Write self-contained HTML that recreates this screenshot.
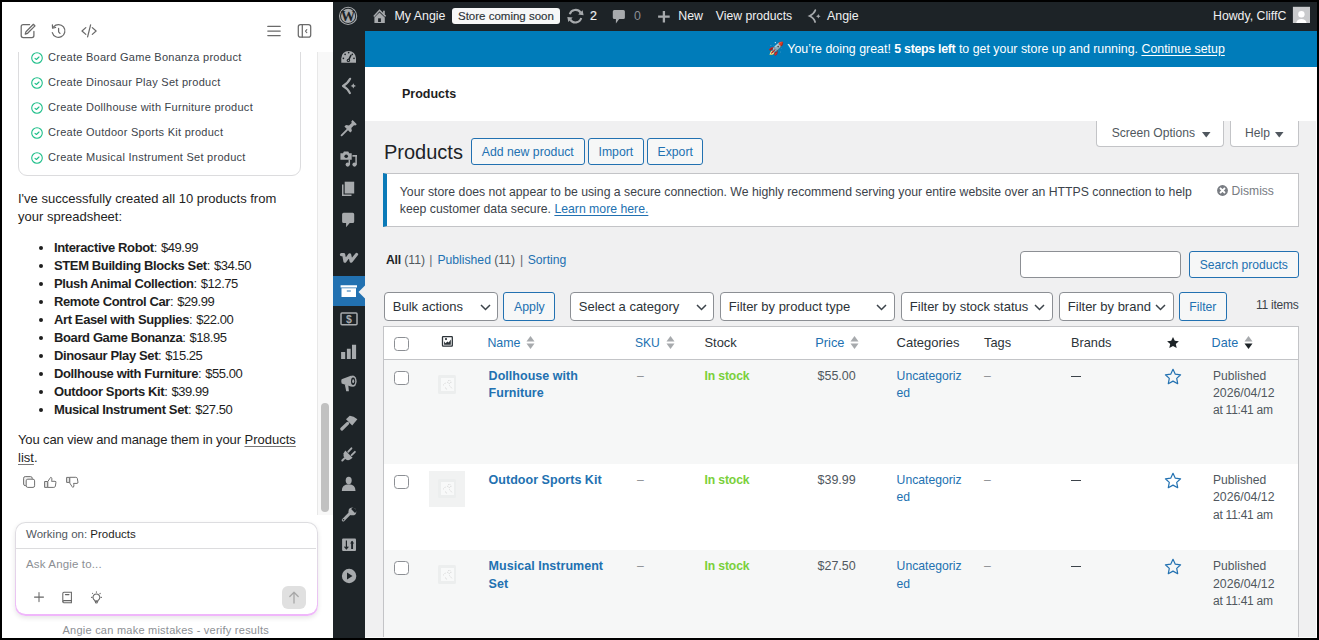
<!DOCTYPE html>
<html><head><meta charset="utf-8"><title>Products</title>
<style>
html,body{margin:0;padding:0;width:1319px;height:640px;overflow:hidden;background:#000}
body{position:relative;font-family:"Liberation Sans",sans-serif}
.t{position:absolute;white-space:nowrap;line-height:1}
.r{position:absolute;display:block}
b{font-weight:700}
</style></head><body>
<div class="r" style="left:0px;top:0px;width:1319px;height:640px;background:#000"></div>
<div class="r" style="left:2px;top:2px;width:1315px;height:636px;background:#fff"></div>
<div class="r" style="left:2px;top:2px;width:331px;height:636px;background:#fff"></div>
<svg class="r" style="left:0;top:0" width="330" height="50" viewBox="0 0 330 50" fill="none" stroke="#6a6a6a" stroke-width="1.25" stroke-linecap="round" stroke-linejoin="round"><path d="M29.6 24.6H23.2a2 2 0 0 0-2 2v9a2 2 0 0 0 2 2h8.7a2 2 0 0 0 2-2V31.4"/><path d="M33.4 24.3l1.6 1.6-7.4 7.4-2.4.8.8-2.4z"/><path d="M52.3 32.6A6.4 6.4 0 1 0 53.6 26.8"/><path d="M52.4 24.9l.2 3.2 3-.6"/><path d="M58.6 28.4v3.4l1.4 1.6"/><path d="M85.8 27.6L82 31l3.8 3.4M92.3 27.6L96.1 31l-3.8 3.4M90.6 24.8L87.6 36.8"/><path d="M267.8 26.4h12.4M267.8 31h12.4M267.8 35.5h12.4"/><rect x="298.3" y="24.6" width="12.4" height="12.5" rx="2.2"/><path d="M302.3 24.8v12.2"/><path d="M306.8 29.6l-1.3 1.5 1.3 1.5" stroke-width="1.1"/></svg>
<div class="r" style="left:2px;top:52px;width:315px;height:463px;overflow:hidden">
<div class="r" style="left:16px;top:-40px;width:283px;height:164px;border:1px solid #dcdcde;border-radius:9px;box-sizing:border-box"></div>
</div>
<svg class="r" style="left:31px;top:52px;" width="12" height="12" viewBox="0 0 12 12" fill="none"><circle cx="6" cy="6" r="5.3" stroke="#1fbf8a" stroke-width="1.1"/><path d="M4 6.3l1.4 1.2 2.6-2.5" stroke="#1fbf8a" stroke-width="1.1" stroke-linecap="round" stroke-linejoin="round"/></svg>
<div class="t" style="left:48px;top:52.00px;font-size:11px;font-weight:400;color:#3c434a;letter-spacing:.27px">Create Board Game Bonanza product</div>
<svg class="r" style="left:31px;top:77px;" width="12" height="12" viewBox="0 0 12 12" fill="none"><circle cx="6" cy="6" r="5.3" stroke="#1fbf8a" stroke-width="1.1"/><path d="M4 6.3l1.4 1.2 2.6-2.5" stroke="#1fbf8a" stroke-width="1.1" stroke-linecap="round" stroke-linejoin="round"/></svg>
<div class="t" style="left:48px;top:77.00px;font-size:11px;font-weight:400;color:#3c434a;letter-spacing:.27px">Create Dinosaur Play Set product</div>
<svg class="r" style="left:31px;top:102px;" width="12" height="12" viewBox="0 0 12 12" fill="none"><circle cx="6" cy="6" r="5.3" stroke="#1fbf8a" stroke-width="1.1"/><path d="M4 6.3l1.4 1.2 2.6-2.5" stroke="#1fbf8a" stroke-width="1.1" stroke-linecap="round" stroke-linejoin="round"/></svg>
<div class="t" style="left:48px;top:102.00px;font-size:11px;font-weight:400;color:#3c434a;letter-spacing:.27px">Create Dollhouse with Furniture product</div>
<svg class="r" style="left:31px;top:127px;" width="12" height="12" viewBox="0 0 12 12" fill="none"><circle cx="6" cy="6" r="5.3" stroke="#1fbf8a" stroke-width="1.1"/><path d="M4 6.3l1.4 1.2 2.6-2.5" stroke="#1fbf8a" stroke-width="1.1" stroke-linecap="round" stroke-linejoin="round"/></svg>
<div class="t" style="left:48px;top:127.00px;font-size:11px;font-weight:400;color:#3c434a;letter-spacing:.27px">Create Outdoor Sports Kit product</div>
<svg class="r" style="left:31px;top:152px;" width="12" height="12" viewBox="0 0 12 12" fill="none"><circle cx="6" cy="6" r="5.3" stroke="#1fbf8a" stroke-width="1.1"/><path d="M4 6.3l1.4 1.2 2.6-2.5" stroke="#1fbf8a" stroke-width="1.1" stroke-linecap="round" stroke-linejoin="round"/></svg>
<div class="t" style="left:48px;top:152.00px;font-size:11px;font-weight:400;color:#3c434a;letter-spacing:.27px">Create Musical Instrument Set product</div>
<div class="t" style="left:18px;top:192.00px;font-size:13px;font-weight:400;color:#1e1e1e;">I&#x27;ve successfully created all 10 products from</div>
<div class="t" style="left:18px;top:210.00px;font-size:13px;font-weight:400;color:#1e1e1e;">your spreadsheet:</div>
<div class="r" style="left:39px;top:246px;width:4.3px;height:4.3px;background:#1e1e1e;border-radius:50%"></div>
<div class="t" style="left:54px;top:241.00px;font-size:13px;font-weight:400;color:#1e1e1e;"><b style="letter-spacing:-.38px">Interactive Robot</b>: <span style="letter-spacing:-.45px">$49.99</span></div>
<div class="r" style="left:39px;top:264px;width:4.3px;height:4.3px;background:#1e1e1e;border-radius:50%"></div>
<div class="t" style="left:54px;top:259.00px;font-size:13px;font-weight:400;color:#1e1e1e;"><b style="letter-spacing:-.38px">STEM Building Blocks Set</b>: <span style="letter-spacing:-.45px">$34.50</span></div>
<div class="r" style="left:39px;top:282px;width:4.3px;height:4.3px;background:#1e1e1e;border-radius:50%"></div>
<div class="t" style="left:54px;top:277.00px;font-size:13px;font-weight:400;color:#1e1e1e;"><b style="letter-spacing:-.38px">Plush Animal Collection</b>: <span style="letter-spacing:-.45px">$12.75</span></div>
<div class="r" style="left:39px;top:300px;width:4.3px;height:4.3px;background:#1e1e1e;border-radius:50%"></div>
<div class="t" style="left:54px;top:295.00px;font-size:13px;font-weight:400;color:#1e1e1e;"><b style="letter-spacing:-.38px">Remote Control Car</b>: <span style="letter-spacing:-.45px">$29.99</span></div>
<div class="r" style="left:39px;top:318px;width:4.3px;height:4.3px;background:#1e1e1e;border-radius:50%"></div>
<div class="t" style="left:54px;top:313.00px;font-size:13px;font-weight:400;color:#1e1e1e;"><b style="letter-spacing:-.38px">Art Easel with Supplies</b>: <span style="letter-spacing:-.45px">$22.00</span></div>
<div class="r" style="left:39px;top:336px;width:4.3px;height:4.3px;background:#1e1e1e;border-radius:50%"></div>
<div class="t" style="left:54px;top:331.00px;font-size:13px;font-weight:400;color:#1e1e1e;"><b style="letter-spacing:-.38px">Board Game Bonanza</b>: <span style="letter-spacing:-.45px">$18.95</span></div>
<div class="r" style="left:39px;top:354px;width:4.3px;height:4.3px;background:#1e1e1e;border-radius:50%"></div>
<div class="t" style="left:54px;top:349.00px;font-size:13px;font-weight:400;color:#1e1e1e;"><b style="letter-spacing:-.38px">Dinosaur Play Set</b>: <span style="letter-spacing:-.45px">$15.25</span></div>
<div class="r" style="left:39px;top:372px;width:4.3px;height:4.3px;background:#1e1e1e;border-radius:50%"></div>
<div class="t" style="left:54px;top:367.00px;font-size:13px;font-weight:400;color:#1e1e1e;"><b style="letter-spacing:-.38px">Dollhouse with Furniture</b>: <span style="letter-spacing:-.45px">$55.00</span></div>
<div class="r" style="left:39px;top:390px;width:4.3px;height:4.3px;background:#1e1e1e;border-radius:50%"></div>
<div class="t" style="left:54px;top:385.00px;font-size:13px;font-weight:400;color:#1e1e1e;"><b style="letter-spacing:-.38px">Outdoor Sports Kit</b>: <span style="letter-spacing:-.45px">$39.99</span></div>
<div class="r" style="left:39px;top:408px;width:4.3px;height:4.3px;background:#1e1e1e;border-radius:50%"></div>
<div class="t" style="left:54px;top:403.00px;font-size:13px;font-weight:400;color:#1e1e1e;"><b style="letter-spacing:-.38px">Musical Instrument Set</b>: <span style="letter-spacing:-.45px">$27.50</span></div>
<div class="t" style="left:18px;top:433.00px;font-size:13px;font-weight:400;color:#1e1e1e;"><span style="letter-spacing:-.12px">You can view and manage them in your</span> <u style="text-underline-offset:2px;text-decoration-thickness:1px;text-decoration-color:#777">Products</u></div>
<div class="t" style="left:18px;top:451.00px;font-size:13px;font-weight:400;color:#1e1e1e;"><u style="text-underline-offset:2px;text-decoration-thickness:1px;text-decoration-color:#777">list</u>.</div>
<svg class="r" style="left:15px;top:470px" width="70" height="24" viewBox="15 470 70 24" stroke="#707070" stroke-width="1" stroke-linejoin="round"><rect x="23.6" y="476.6" width="8.6" height="9" rx="1.6" fill="#f0f0f0"/><rect x="26.2" y="479.2" width="8.4" height="8.2" rx="1.6" fill="#fff"/><rect x="44.6" y="481.5" width="3.2" height="5.9" fill="#e6e6e6"/><path d="M47.8 481.6L50 478.2Q50.6 476.9 51.4 477.6Q52.2 478.5 51.8 480.3L51.5 481.3H55Q56.3 481.3 55.9 482.8L55.3 486.3Q55 487.4 53.8 487.4H47.8z" fill="#fff"/><rect x="66.6" y="477.4" width="3.2" height="5" fill="#e6e6e6"/><path d="M69.8 483.1L72 486.5Q72.6 487.8 73.4 487.1Q74.2 486.2 73.8 484.4L73.5 483.4H77Q78.3 483.4 77.9 481.9L77.3 478.4Q77 477.3 75.8 477.3H69.8z" fill="#fff"/></svg>
<div class="r" style="left:317px;top:52px;width:16px;height:463px;background:#f8f8f8;border-left:1px solid #e8e8e8;box-sizing:border-box"></div>
<div class="r" style="left:320.8px;top:403px;width:8px;height:109px;background:#c1c1c1;border-radius:4px"></div>
<div class="r" style="left:14.5px;top:522px;width:303px;height:94px;border-radius:10.5px;background:linear-gradient(180deg,#dddde0 0%,#e2d8e6 45%,#f0b6fb 100%);box-shadow:0 2px 5px rgba(0,0,0,.10)"></div>
<div class="r" style="left:15.5px;top:523px;width:301px;height:90.5px;border-radius:9.5px;background:#fff"></div>
<div class="r" style="left:16px;top:548px;width:300px;height:1px;background:#dcdcde"></div>
<div class="t" style="left:26px;top:529.00px;font-size:11.5px;font-weight:400;color:#50575e;">Working on: <span style="color:#1e1e1e">Products</span></div>
<div class="t" style="left:26px;top:559.00px;font-size:11.5px;font-weight:400;color:#8c8f94;letter-spacing:.15px">Ask Angie to...</div>
<svg class="r" style="left:20px;top:580px" width="100" height="30" viewBox="20 580 100 30" fill="none" stroke="#666" stroke-width="1.05" stroke-linecap="round"><path d="M39 592.6v9M34.5 597.1h9"/><path d="M64 592.2h7.4v8.4H64.2a1.4 1.4 0 0 0-1.4 1.4V593.6a1.4 1.4 0 0 1 1.2-1.4z"/><path d="M62.8 601.8a.9.9 0 0 0 .9.9h7.7v-2.1"/><path d="M65.4 594.6h3.6"/><path d="M94.6 600.2a3.4 3.4 0 1 1 3.6 0l-.4.9h-2.8z"/><circle cx="96.4" cy="601.9" r="1"/><path d="M92.6 593.4l.01.01M96.4 591.9v.3M100.2 593.4l-.2.2M91.6 597.4h.4M101 597.4h.4" stroke-width="1.1"/></svg>
<div class="r" style="left:282px;top:586px;width:24px;height:23px;background:#e0e0e0;border-radius:6px"></div>
<svg class="r" style="left:288px;top:591px;" width="12" height="13" viewBox="0 0 12 13" fill="none"><path d="M6 12V1.5M1.8 5.5L6 1.3l4.2 4.2" stroke="#a8a8a8" stroke-width="1.3" stroke-linecap="round" stroke-linejoin="round"/></svg>
<div class="t" style="left:62.5px;top:625.00px;font-size:11px;font-weight:400;color:#8c8f94;letter-spacing:.24px">Angie can make mistakes - verify results</div>
<div class="r" style="left:333px;top:2px;width:984px;height:29px;background:#1d2327"></div>
<div class="r" style="left:333px;top:31px;width:32px;height:607px;background:#1d2327"></div>
<svg class="r" style="left:333px;top:0" width="986" height="32" viewBox="333 0 986 32"><circle cx="348.1" cy="15.9" r="8.6" stroke="#a7aaad" stroke-width="1.1" fill="none"/><circle cx="348.1" cy="15.9" r="7.1" fill="#a7aaad"/><text x="348.1" y="21" font-family="Liberation Serif" font-weight="700" font-size="14.5" fill="#1d2327" text-anchor="middle">W</text><path d="M373.8 16.4L379.5 10.3L385.6 16.4" stroke="#a7aaad" stroke-width="1.5" fill="none"/><path d="M383.1 10.7h1.7v3.7h-1.7z" fill="#a7aaad"/><path d="M374.4 23.1V17.4L379.5 12.4L384.8 17.4V23.1z" fill="#a7aaad"/><path d="M378.1 18.3h2.8v3.7h-2.8z" fill="#1d2327"/><path d="M569.8 14.2A6 6 0 0 1 580.6 12.6M581.2 18A6 6 0 0 1 570.3 19.6" stroke="#a7aaad" stroke-width="2.1" fill="none"/><path d="M578.2 14.6L583.6 15.3L582.6 10.2zM572.7 17.6L567.3 16.9L568.3 22z" fill="#a7aaad"/><path d="M614.3 9.9h9.1a1.5 1.5 0 0 1 1.5 1.5v6a1.5 1.5 0 0 1-1.5 1.5h-4.2l-3.3 4.7v-4.7h-1.6a1.5 1.5 0 0 1-1.5-1.5v-6a1.5 1.5 0 0 1 1.5-1.5z" fill="#a7aaad"/><path d="M663.9 10.9v11.6M658.1 16.7h11.6" stroke="#a7aaad" stroke-width="2.3"/><path d="M815.3 10.2C814.4 12.6 812.3 14.7 809.6 16C812.3 17.3 814.4 19.4 815.1 22" stroke="#a7aaad" stroke-width="1.8" stroke-linecap="round" fill="none"/><path d="M818.3 14Q818.6 16 820.6 16.3Q818.6 16.6 818.3 18.6Q818 16.6 816 16.3Q818 16 818.3 14z" fill="#a7aaad"/><rect x="1292.9" y="6.8" width="17.1" height="16.2" fill="#c9cacc"/><circle cx="1301.4" cy="14.3" r="3.2" fill="#fff"/><path d="M1296.2 23C1296.6 20.3 1298.6 18.9 1301.4 18.9S1306.2 20.3 1306.6 23z" fill="#fff"/></svg>
<div class="t" style="left:394.5px;top:10.00px;font-size:12.4px;font-weight:400;color:#f0f0f1;">My Angie</div>
<div class="r" style="left:452px;top:8px;width:108px;height:16px;background:#f6f7f7;border-radius:3px"></div>
<div class="t" style="left:458px;top:11.00px;font-size:11.5px;font-weight:400;color:#2c3338;letter-spacing:0px;-webkit-text-stroke:.15px #2c3338">Store coming soon</div>
<div class="t" style="left:590px;top:10.00px;font-size:12.4px;font-weight:400;color:#f0f0f1;-webkit-text-stroke:.2px #f0f0f1">2</div>
<div class="t" style="left:634px;top:10.00px;font-size:12.4px;font-weight:400;color:#8c8f94;">0</div>
<div class="t" style="left:678.2px;top:10.00px;font-size:12.4px;font-weight:400;color:#f0f0f1;">New</div>
<div class="t" style="left:715.8px;top:10.00px;font-size:12.2px;font-weight:400;color:#f0f0f1;">View products</div>
<div class="t" style="left:827px;top:10.00px;font-size:12.4px;font-weight:400;color:#f0f0f1;">Angie</div>
<div class="t" style="left:1213px;top:10.00px;font-size:12.3px;font-weight:400;color:#f0f0f1;">Howdy, CliffC</div>
<div class="r" style="left:365px;top:31px;width:952px;height:36px;background:#007cba"></div>
<div class="t" style="left:768px;top:42.00px;font-size:13px;font-weight:400;color:#fff;">🚀</div>
<div class="t" style="left:787.3px;top:43.00px;font-size:12.4px;font-weight:400;color:#fff;">You’re doing great! <b style="letter-spacing:-.3px">5 steps left</b> to get your store up and running. <u style="text-underline-offset:1.5px">Continue setup</u></div>
<div class="r" style="left:365px;top:67px;width:952px;height:54px;background:#fff"></div>
<div class="t" style="left:402px;top:88.00px;font-size:12.5px;font-weight:700;color:#1e1e1e;">Products</div>
<div class="r" style="left:365px;top:121px;width:952px;height:517px;background:#f0f0f1"></div>
<div class="r" style="left:1096px;top:121px;width:128px;height:25.5px;background:#fff;border:1px solid #c3c4c7;border-top:0;border-radius:0 0 4px 4px;box-sizing:border-box"></div>
<div class="t" style="left:1111.7px;top:127.00px;font-size:12.1px;font-weight:400;color:#50575e;">Screen Options</div>
<svg class="r" style="left:1202px;top:131.5px;" width="9" height="6" viewBox="0 0 9 6" fill="none"><path d="M0 0h8.5L4.25 5.5z" fill="#50575e"/></svg>
<div class="r" style="left:1230px;top:121px;width:68.5px;height:25.5px;background:#fff;border:1px solid #c3c4c7;border-top:0;border-radius:0 0 4px 4px;box-sizing:border-box"></div>
<div class="t" style="left:1245px;top:127.00px;font-size:12.1px;font-weight:400;color:#50575e;">Help</div>
<svg class="r" style="left:1275px;top:131.5px;" width="9" height="6" viewBox="0 0 9 6" fill="none"><path d="M0 0h8.5L4.25 5.5z" fill="#50575e"/></svg>
<div class="t" style="left:384px;top:142.00px;font-size:20px;font-weight:400;color:#1d2327;">Products</div>
<div class="r" style="left:471px;top:138px;width:114px;height:27px;background:#f6f7f7;border:1px solid #2271b1;border-radius:3px;box-sizing:border-box"></div>
<div class="r" style="left:588px;top:138px;width:56px;height:27px;background:#f6f7f7;border:1px solid #2271b1;border-radius:3px;box-sizing:border-box"></div>
<div class="r" style="left:647px;top:138px;width:56px;height:27px;background:#f6f7f7;border:1px solid #2271b1;border-radius:3px;box-sizing:border-box"></div>
<div class="t" style="left:481.8px;top:146.00px;font-size:12.25px;font-weight:400;color:#2271b1;">Add new product</div>
<div class="t" style="left:598.5px;top:146.00px;font-size:12.25px;font-weight:400;color:#2271b1;">Import</div>
<div class="t" style="left:657.5px;top:146.00px;font-size:12.25px;font-weight:400;color:#2271b1;">Export</div>
<div class="r" style="left:383px;top:173px;width:916px;height:53.5px;background:#fff;border:1px solid #c3c4c7;border-left:4px solid #0a7ab8;box-sizing:border-box"></div>
<div class="t" style="left:399.8px;top:186.00px;font-size:12.26px;font-weight:400;color:#3c434a;">Your store does not appear to be using a secure connection. We highly recommend serving your entire website over an HTTPS connection to help</div>
<div class="t" style="left:399.8px;top:203.00px;font-size:12.26px;font-weight:400;color:#3c434a;">keep customer data secure. <u style="color:#2271b1;text-underline-offset:1.5px">Learn more here.</u></div>
<svg class="r" style="left:1217px;top:185px;" width="11" height="11" viewBox="0 0 11 11" fill="none"><circle cx="5.5" cy="5.5" r="5.4" fill="#787c82"/><path d="M3 3l5 5M8 3l-5 5" stroke="#fff" stroke-width="1.8"/></svg>
<div class="t" style="left:1231.6px;top:185.00px;font-size:12.1px;font-weight:400;color:#787c82;">Dismiss</div>
<div class="t" style="left:385.9px;top:254.00px;font-size:12.2px;font-weight:400;color:#3c434a;"><b style="color:#1d2327;letter-spacing:-.2px">All</b> <span style="color:#50575e">(11)</span></div>
<div class="t" style="left:429.3px;top:254.00px;font-size:12.2px;font-weight:400;color:#646970;">|</div>
<div class="t" style="left:437.4px;top:254.00px;font-size:12.2px;font-weight:400;color:#3c434a;"><span style="color:#2271b1">Published</span> <span style="color:#50575e">(11)</span></div>
<div class="t" style="left:520px;top:254.00px;font-size:12.2px;font-weight:400;color:#646970;">|</div>
<div class="t" style="left:527.7px;top:254.00px;font-size:12.2px;font-weight:400;color:#2271b1;">Sorting</div>
<div class="r" style="left:1020px;top:251px;width:160.5px;height:26.5px;background:#fff;border:1px solid #8c8f94;border-radius:4px;box-sizing:border-box"></div>
<div class="r" style="left:1189px;top:251px;width:110px;height:26.5px;background:#f6f7f7;border:1px solid #2271b1;border-radius:3px;box-sizing:border-box"></div>
<div class="t" style="left:1199.8px;top:259.00px;font-size:12.1px;font-weight:400;color:#2271b1;">Search products</div>
<div class="r" style="left:384px;top:292px;width:114px;height:28.5px;background:#fff;border:1px solid #8c8f94;border-radius:4px;box-sizing:border-box"></div>
<div class="t" style="left:392.8px;top:300.00px;font-size:13px;font-weight:400;color:#2c3338;">Bulk actions</div>
<svg class="r" style="left:479.5px;top:303.5px;" width="11" height="7" viewBox="0 0 11 7" fill="none"><path d="M1 1l4.5 4.5L10 1" stroke="#3c434a" stroke-width="1.5" fill="none"/></svg>
<div class="r" style="left:503px;top:292px;width:52px;height:28.5px;background:#f6f7f7;border:1px solid #2271b1;border-radius:3px;box-sizing:border-box"></div>
<div class="t" style="left:514px;top:301.00px;font-size:12.3px;font-weight:400;color:#2271b1;">Apply</div>
<div class="r" style="left:570px;top:292px;width:144px;height:28.5px;background:#fff;border:1px solid #8c8f94;border-radius:4px;box-sizing:border-box"></div>
<div class="t" style="left:578.8px;top:300.00px;font-size:13px;font-weight:400;color:#2c3338;">Select a category</div>
<svg class="r" style="left:695.5px;top:303.5px;" width="11" height="7" viewBox="0 0 11 7" fill="none"><path d="M1 1l4.5 4.5L10 1" stroke="#3c434a" stroke-width="1.5" fill="none"/></svg>
<div class="r" style="left:720px;top:292px;width:174.5px;height:28.5px;background:#fff;border:1px solid #8c8f94;border-radius:4px;box-sizing:border-box"></div>
<div class="t" style="left:728.8px;top:300.00px;font-size:13px;font-weight:400;color:#2c3338;">Filter by product type</div>
<svg class="r" style="left:876.0px;top:303.5px;" width="11" height="7" viewBox="0 0 11 7" fill="none"><path d="M1 1l4.5 4.5L10 1" stroke="#3c434a" stroke-width="1.5" fill="none"/></svg>
<div class="r" style="left:901px;top:292px;width:151.5px;height:28.5px;background:#fff;border:1px solid #8c8f94;border-radius:4px;box-sizing:border-box"></div>
<div class="t" style="left:909.8px;top:300.00px;font-size:13px;font-weight:400;color:#2c3338;">Filter by stock status</div>
<svg class="r" style="left:1034.0px;top:303.5px;" width="11" height="7" viewBox="0 0 11 7" fill="none"><path d="M1 1l4.5 4.5L10 1" stroke="#3c434a" stroke-width="1.5" fill="none"/></svg>
<div class="r" style="left:1059px;top:292px;width:114.5px;height:28.5px;background:#fff;border:1px solid #8c8f94;border-radius:4px;box-sizing:border-box"></div>
<div class="t" style="left:1067.8px;top:300.00px;font-size:13px;font-weight:400;color:#2c3338;">Filter by brand</div>
<svg class="r" style="left:1155.0px;top:303.5px;" width="11" height="7" viewBox="0 0 11 7" fill="none"><path d="M1 1l4.5 4.5L10 1" stroke="#3c434a" stroke-width="1.5" fill="none"/></svg>
<div class="r" style="left:1179px;top:292px;width:48px;height:28.5px;background:#f6f7f7;border:1px solid #2271b1;border-radius:3px;box-sizing:border-box"></div>
<div class="t" style="left:1189.3px;top:301.00px;font-size:12.2px;font-weight:400;color:#2271b1;">Filter</div>
<div class="t" style="left:1255.9px;top:299.00px;font-size:12px;font-weight:400;color:#3c434a;letter-spacing:-.22px">11 items</div>
<div class="r" style="left:383px;top:326px;width:916px;height:312px;background:#fff;border:1px solid #c3c4c7;border-bottom:0;box-sizing:border-box"></div>
<div class="r" style="left:384px;top:359px;width:914px;height:1px;background:#c3c4c7"></div>
<div class="r" style="left:384px;top:360px;width:914px;height:104px;background:#f6f7f7"></div>
<div class="r" style="left:384px;top:550px;width:914px;height:88px;background:#f6f7f7"></div>
<div class="r" style="left:394px;top:337px;width:15px;height:14px;background:#fff;border:1px solid #8c8f94;border-radius:3.5px;box-sizing:border-box"></div>
<svg class="r" style="left:436px;top:332px" width="24" height="20" viewBox="436 332 24 20"><rect x="442.5" y="336.6" width="9.8" height="9.6" rx=".6" stroke="#2c3338" stroke-width="1.3" fill="#fff"/><circle cx="446" cy="339.1" r="1.1" fill="#2c3338"/><path d="M444.1 344.8V341.2L445.5 343.2L447.4 341.5L448.7 342.6L450.8 339.4V344.8z" fill="#2c3338"/></svg>
<div class="t" style="left:487.4px;top:337.00px;font-size:12.4px;font-weight:400;color:#2271b1;">Name</div>
<svg class="r" style="left:525.5px;top:335.5px;" width="9" height="13" viewBox="0 0 9 13" fill="none"><path d="M4.5 0L8.5 5.5H.5z" fill="#a7aaad"/><path d="M4.5 13L.5 7.5h8z" fill="#a7aaad"/></svg>
<div class="t" style="left:634.9px;top:337.00px;font-size:12.1px;font-weight:400;color:#2271b1;">SKU</div>
<svg class="r" style="left:665.5px;top:335.5px;" width="9" height="13" viewBox="0 0 9 13" fill="none"><path d="M4.5 0L8.5 5.5H.5z" fill="#a7aaad"/><path d="M4.5 13L.5 7.5h8z" fill="#a7aaad"/></svg>
<div class="t" style="left:704.5px;top:337.00px;font-size:12.9px;font-weight:400;color:#2c3338;">Stock</div>
<div class="t" style="left:815.3px;top:337.00px;font-size:12.8px;font-weight:400;color:#2271b1;">Price</div>
<svg class="r" style="left:850px;top:335.5px;" width="9" height="13" viewBox="0 0 9 13" fill="none"><path d="M4.5 0L8.5 5.5H.5z" fill="#a7aaad"/><path d="M4.5 13L.5 7.5h8z" fill="#a7aaad"/></svg>
<div class="t" style="left:896.6px;top:336.00px;font-size:13px;font-weight:400;color:#2c3338;">Categories</div>
<div class="t" style="left:984px;top:337.00px;font-size:12.8px;font-weight:400;color:#2c3338;">Tags</div>
<div class="t" style="left:1071px;top:337.00px;font-size:12.75px;font-weight:400;color:#2c3338;">Brands</div>
<svg class="r" style="left:1167px;top:337px;" width="12" height="11" viewBox="0 0 12 11" fill="none"><path d="M6 0l1.8 3.8 4.1.4-3.1 2.8.9 4L6 9 2.3 11l.9-4L.1 4.2l4.1-.4z" fill="#1d2327"/></svg>
<div class="t" style="left:1211.6px;top:337.00px;font-size:12.6px;font-weight:400;color:#2271b1;">Date</div>
<svg class="r" style="left:1243.5px;top:335.5px;" width="9" height="13" viewBox="0 0 9 13" fill="none"><path d="M4.5 0L8.5 5.5H.5z" fill="#a7aaad"/><path d="M4.5 13L.5 7.5h8z" fill="#1d2327"/></svg>
<div class="r" style="left:394px;top:370.5px;width:15px;height:14px;background:#fff;border:1px solid #8c8f94;border-radius:3.5px;box-sizing:border-box"></div>
<div class="r" style="left:437.7px;top:375.4px;width:18.6px;height:18.6px;background:#eceeee;border-radius:1.5px"></div>
<div class="r" style="left:440.5px;top:378.2px;width:13px;height:13px;background:#f8f9f9"></div>
<svg class="r" style="left:440.5px;top:378.2px;" width="13" height="13" viewBox="0 0 13 13" fill="none"><path d="M2.2 7.2L5 4.4M4 9.5l2.3 2.2M8.5 7.5l2.5 3" stroke="#c8c8c8" stroke-width=".8" stroke-dasharray="1 .8" fill="none"/><circle cx="8.3" cy="4" r="1.6" stroke="#c8c8c8" stroke-width=".8" stroke-dasharray="1 .8"/></svg>
<div class="t" style="left:488.6px;top:370.00px;font-size:12.5px;font-weight:700;color:#2271b1;letter-spacing:.03px">Dollhouse with</div>
<div class="t" style="left:488.6px;top:387.00px;font-size:12.5px;font-weight:700;color:#2271b1;letter-spacing:.03px">Furniture</div>
<div class="t" style="left:637px;top:370.00px;font-size:12.2px;font-weight:400;color:#8c8f94;">–</div>
<div class="t" style="left:704.5px;top:370.00px;font-size:12.2px;font-weight:700;color:#7ad03a;letter-spacing:-.14px">In stock</div>
<div class="t" style="left:817.5px;top:370.00px;font-size:12.5px;font-weight:400;color:#50575e;">$55.00</div>
<div class="t" style="left:896.6px;top:370.00px;font-size:12.2px;font-weight:400;color:#2271b1;">Uncategoriz</div>
<div class="t" style="left:896.6px;top:387.00px;font-size:12.2px;font-weight:400;color:#2271b1;">ed</div>
<div class="t" style="left:984px;top:370.00px;font-size:12.2px;font-weight:400;color:#8c8f94;">–</div>
<div class="r" style="left:1071px;top:375.5px;width:10px;height:1.3px;background:#3c434a"></div>
<svg class="r" style="left:1164px;top:367.5px;" width="18" height="17" viewBox="0 0 18 17" fill="none"><path d="M9 1.3l2.3 4.9 5.3.6-3.9 3.6 1 5.3L9 13.1l-4.7 2.6 1-5.3L1.4 6.8l5.3-.6z" stroke="#2271b1" stroke-width="1.2" stroke-linejoin="round"/></svg>
<div class="t" style="left:1213px;top:370.00px;font-size:12.1px;font-weight:400;color:#50575e;">Published</div>
<div class="t" style="left:1213px;top:387.00px;font-size:12.3px;font-weight:400;color:#50575e;">2026/04/12</div>
<div class="t" style="left:1213px;top:404.00px;font-size:12px;font-weight:400;color:#50575e;letter-spacing:-.25px">at 11:41 am</div>
<div class="r" style="left:394px;top:474.5px;width:15px;height:14px;background:#fff;border:1px solid #8c8f94;border-radius:3.5px;box-sizing:border-box"></div>
<div class="r" style="left:429px;top:471px;width:36px;height:36px;background:#f1f2f2"></div>
<div class="r" style="left:437.7px;top:479.4px;width:18.6px;height:18.6px;background:#eceeee;border-radius:1.5px"></div>
<div class="r" style="left:440.5px;top:482.2px;width:13px;height:13px;background:#f8f9f9"></div>
<svg class="r" style="left:440.5px;top:482.2px;" width="13" height="13" viewBox="0 0 13 13" fill="none"><path d="M2.2 7.2L5 4.4M4 9.5l2.3 2.2M8.5 7.5l2.5 3" stroke="#c8c8c8" stroke-width=".8" stroke-dasharray="1 .8" fill="none"/><circle cx="8.3" cy="4" r="1.6" stroke="#c8c8c8" stroke-width=".8" stroke-dasharray="1 .8"/></svg>
<div class="t" style="left:488.6px;top:474.00px;font-size:12.5px;font-weight:700;color:#2271b1;letter-spacing:.03px">Outdoor Sports Kit</div>
<div class="t" style="left:637px;top:474.00px;font-size:12.2px;font-weight:400;color:#8c8f94;">–</div>
<div class="t" style="left:704.5px;top:474.00px;font-size:12.2px;font-weight:700;color:#7ad03a;letter-spacing:-.14px">In stock</div>
<div class="t" style="left:817.5px;top:474.00px;font-size:12.5px;font-weight:400;color:#50575e;">$39.99</div>
<div class="t" style="left:896.6px;top:474.00px;font-size:12.2px;font-weight:400;color:#2271b1;">Uncategoriz</div>
<div class="t" style="left:896.6px;top:491.00px;font-size:12.2px;font-weight:400;color:#2271b1;">ed</div>
<div class="t" style="left:984px;top:474.00px;font-size:12.2px;font-weight:400;color:#8c8f94;">–</div>
<div class="r" style="left:1071px;top:479.5px;width:10px;height:1.3px;background:#3c434a"></div>
<svg class="r" style="left:1164px;top:471.5px;" width="18" height="17" viewBox="0 0 18 17" fill="none"><path d="M9 1.3l2.3 4.9 5.3.6-3.9 3.6 1 5.3L9 13.1l-4.7 2.6 1-5.3L1.4 6.8l5.3-.6z" stroke="#2271b1" stroke-width="1.2" stroke-linejoin="round"/></svg>
<div class="t" style="left:1213px;top:474.00px;font-size:12.1px;font-weight:400;color:#50575e;">Published</div>
<div class="t" style="left:1213px;top:491.00px;font-size:12.3px;font-weight:400;color:#50575e;">2026/04/12</div>
<div class="t" style="left:1213px;top:509.00px;font-size:12px;font-weight:400;color:#50575e;letter-spacing:-.25px">at 11:41 am</div>
<div class="r" style="left:394px;top:560.5px;width:15px;height:14px;background:#fff;border:1px solid #8c8f94;border-radius:3.5px;box-sizing:border-box"></div>
<div class="r" style="left:437.7px;top:565.4px;width:18.6px;height:18.6px;background:#eceeee;border-radius:1.5px"></div>
<div class="r" style="left:440.5px;top:568.2px;width:13px;height:13px;background:#f8f9f9"></div>
<svg class="r" style="left:440.5px;top:568.2px;" width="13" height="13" viewBox="0 0 13 13" fill="none"><path d="M2.2 7.2L5 4.4M4 9.5l2.3 2.2M8.5 7.5l2.5 3" stroke="#c8c8c8" stroke-width=".8" stroke-dasharray="1 .8" fill="none"/><circle cx="8.3" cy="4" r="1.6" stroke="#c8c8c8" stroke-width=".8" stroke-dasharray="1 .8"/></svg>
<div class="t" style="left:488.6px;top:560.00px;font-size:12.5px;font-weight:700;color:#2271b1;letter-spacing:.03px">Musical Instrument</div>
<div class="t" style="left:488.6px;top:578.00px;font-size:12.5px;font-weight:700;color:#2271b1;letter-spacing:.03px">Set</div>
<div class="t" style="left:637px;top:560.00px;font-size:12.2px;font-weight:400;color:#8c8f94;">–</div>
<div class="t" style="left:704.5px;top:560.00px;font-size:12.2px;font-weight:700;color:#7ad03a;letter-spacing:-.14px">In stock</div>
<div class="t" style="left:817.5px;top:560.00px;font-size:12.5px;font-weight:400;color:#50575e;">$27.50</div>
<div class="t" style="left:896.6px;top:560.00px;font-size:12.2px;font-weight:400;color:#2271b1;">Uncategoriz</div>
<div class="t" style="left:896.6px;top:578.00px;font-size:12.2px;font-weight:400;color:#2271b1;">ed</div>
<div class="t" style="left:984px;top:560.00px;font-size:12.2px;font-weight:400;color:#8c8f94;">–</div>
<div class="r" style="left:1071px;top:565.5px;width:10px;height:1.3px;background:#3c434a"></div>
<svg class="r" style="left:1164px;top:557.5px;" width="18" height="17" viewBox="0 0 18 17" fill="none"><path d="M9 1.3l2.3 4.9 5.3.6-3.9 3.6 1 5.3L9 13.1l-4.7 2.6 1-5.3L1.4 6.8l5.3-.6z" stroke="#2271b1" stroke-width="1.2" stroke-linejoin="round"/></svg>
<div class="t" style="left:1213px;top:560.00px;font-size:12.1px;font-weight:400;color:#50575e;">Published</div>
<div class="t" style="left:1213px;top:578.00px;font-size:12.3px;font-weight:400;color:#50575e;">2026/04/12</div>
<div class="t" style="left:1213px;top:595.00px;font-size:12px;font-weight:400;color:#50575e;letter-spacing:-.25px">at 11:41 am</div>
<svg class="r" style="left:333px;top:0" width="32" height="640" viewBox="333 0 32 640"><path d="M341.3 62.7V58.3A7.35 7.35 0 0 1 356 58.3V62.7z" fill="#a7aaad"/><g fill="#1d2327"><circle cx="343.4" cy="58.3" r=".85"/><circle cx="345.1" cy="54.3" r=".85"/><circle cx="348.65" cy="52.6" r=".85"/><circle cx="352.3" cy="54.3" r=".85"/><circle cx="354" cy="58.3" r=".85"/></g><path d="M348.4 60.4L350.9 55.4" stroke="#1d2327" stroke-width="1.5" stroke-linecap="round"/><circle cx="348.4" cy="60.4" r="1.7" fill="#1d2327"/><circle cx="348.4" cy="60.4" r=".6" fill="#a7aaad"/><path d="M350.1 78.8Q347.6 83.6 343 85.9Q347.6 88.2 349.9 93.1" stroke="#a7aaad" stroke-width="2.2" stroke-linecap="round" stroke-linejoin="round" fill="none"/><path d="M353.3 83.2Q353.7 85.5 356 85.9Q353.7 86.3 353.3 88.6Q352.9 86.3 350.6 85.9Q352.9 85.5 353.3 83.2z" fill="#a7aaad"/><path d="M352.6 120L356.8 124.2L355.4 125.6L354 125.2L351.3 127.9L351.9 130.9L350.3 132.5L344.4 126.6L346 125L349 125.6L351.7 122.9L351.3 121.4z" fill="#a7aaad"/><path d="M347.3 129.6L341.6 135.3" stroke="#a7aaad" stroke-width="1.9" stroke-linecap="round"/><path d="M340.4 153.2h2.6l.9-1.6h4.4l.9 1.6h2.5v6.5h-11.3z" fill="#a7aaad"/><circle cx="346.2" cy="156.2" r="1.8" fill="#1d2327"/><path d="M349.3 159.5v5.2M356.1 155.6v9.1" stroke="#a7aaad" stroke-width="1.5"/><path d="M352.4 155h4.6v1.7h-4.6z" fill="#a7aaad"/><circle cx="347.7" cy="164.6" r="2.1" fill="#a7aaad"/><circle cx="354.5" cy="164.6" r="2.1" fill="#a7aaad"/><path d="M344.7 181.7h9.5v11.8h-9.5z" fill="#a7aaad"/><path d="M342 184.5h1.5v10h8v1.5H342z" fill="#a7aaad"/><path d="M343.6 212.7h9.1a1.5 1.5 0 0 1 1.5 1.5v7.3a1.5 1.5 0 0 1-1.5 1.5h-3l-3.6 4.2v-4.2h-2.5a1.5 1.5 0 0 1-1.5-1.5v-7.3a1.5 1.5 0 0 1 1.5-1.5z" fill="#a7aaad"/><path d="M341.4 254.6H343.7L344.9 261.2L349.7 254.8L351.1 261.2L356.6 254.4" stroke="#a7aaad" stroke-width="3.1" stroke-linecap="round" stroke-linejoin="round" fill="none"/><rect x="333" y="276" width="32" height="30" fill="#2271b1"/><path d="M365 285.5L358.5 292L365 298.5z" fill="#f0f0f1"/><path d="M340.6 285.2h16.4v2.2h-16.4zM341.5 288.3h14.5v8.8h-14.5z" fill="#fff"/><path d="M346.8 291h4" stroke="#2271b1" stroke-width="1"/><rect x="341" y="313" width="16" height="11.8" rx="1" stroke="#a7aaad" stroke-width="1.5" fill="none"/><text x="349" y="322.8" font-family="Liberation Sans" font-weight="700" font-size="10.5" fill="#a7aaad" text-anchor="middle">$</text><path d="M341.1 352h4.1v7h-4.1zM346.9 348.7h3.8V359h-3.8zM352 344.8h4.1V359H352z" fill="#a7aaad"/><path d="M341.6 379.3L351.5 375.6V386.8L341.6 383.6Q340.8 381.4 341.6 379.3z" fill="#a7aaad"/><ellipse cx="352.9" cy="381.2" rx="3.7" ry="5.6" fill="#a7aaad"/><ellipse cx="353.1" cy="381.2" rx="2.1" ry="3.8" fill="#1d2327"/><ellipse cx="353.2" cy="381.2" rx="1" ry="1.9" fill="#a7aaad"/><path d="M344.8 384.2L348.3 385.3L348.9 391.2H346.2z" fill="#a7aaad"/><path d="M346 419.3L349.7 415.7Q353.5 415.6 357.4 419.2L352.2 425.4z" fill="#a7aaad"/><path d="M345.3 420.2L351.4 426.2" stroke="#1d2327" stroke-width="1"/><path d="M347.6 423.4L341.8 429" stroke="#a7aaad" stroke-width="3.2" stroke-linecap="round"/><path d="M345.3 450.4L352.6 457.7L350.2 459.6Q347.2 461 344.9 458.8Q342.8 456.6 343.6 453.3z" fill="#a7aaad"/><path d="M344.4 458.4L342.3 460.5" stroke="#a7aaad" stroke-width="2" stroke-linecap="round"/><path d="M348.3 451.7L351.4 448.3M351.6 455.1L354.9 451.8" stroke="#a7aaad" stroke-width="1.9" stroke-linecap="round"/><ellipse cx="348.7" cy="480.4" rx="3" ry="3.7" fill="#a7aaad"/><path d="M341.8 491Q341.8 484.3 348.7 484.3Q355.5 484.3 355.5 491z" fill="#a7aaad"/><path d="M343.3 520L351 512.3" stroke="#a7aaad" stroke-width="3" stroke-linecap="round"/><circle cx="352.4" cy="511.4" r="3.9" fill="#a7aaad"/><path d="M353.3 506.9L357.2 510.8L355 513L351.1 509.1z" fill="#1d2327"/><circle cx="343.5" cy="519.8" r=".8" fill="#1d2327"/><rect x="342.1" y="538.5" width="13.9" height="12.6" rx="1" fill="#a7aaad"/><path d="M346.4 540.6v8.3M344.5 546.6l1.9 2.3 1.9-2.3" stroke="#1d2327" stroke-width="1.2" fill="none"/><path d="M352.1 549v-7.6" stroke="#1d2327" stroke-width="1.9"/><path d="M350.1 543.4l2-2.6 2 2.6z" fill="#1d2327"/><circle cx="349.1" cy="576" r="7.2" fill="#a7aaad"/><path d="M347 572.5V579.5L352.5 576z" fill="#1d2327"/></svg>
<div class="r" style="left:1316px;top:67px;width:1px;height:571px;background:#fff"></div>
<div class="r" style="left:365px;top:637px;width:952px;height:1px;background:#fafafa"></div>
</body></html>
